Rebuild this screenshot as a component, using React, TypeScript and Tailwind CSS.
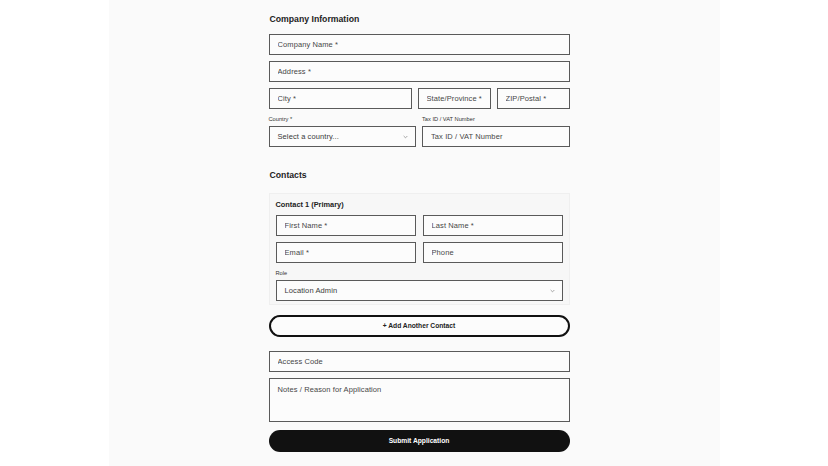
import React from "react";

const font = "font-['Liberation_Sans',Arial,Helvetica,sans-serif]";

const fieldBase =
  "block w-full h-[21px] border border-[#5a5a5a] bg-[#fcfcfc] px-[8px] text-[7.5px] tracking-[0.1px] text-[#333] placeholder:text-[#474747] outline-none";

function Field({ placeholder, className = "" }: { placeholder: string; className?: string }) {
  return <input type="text" placeholder={placeholder} className={`${fieldBase} ${className}`} />;
}

function SelectBox({ value }: { value: string }) {
  return (
    <div className="flex h-[21px] w-full items-center justify-between border border-[#5a5a5a] bg-[#fcfcfc] pl-[8px] pr-[7px] text-[7.5px] tracking-[0.1px] text-[#3a3a3a]">
      <span>{value}</span>
      <svg width="5" height="4" viewBox="0 0 6 4" className="text-[#888]">
        <path d="M0.8 0.8 L3 3 L5.2 0.8" fill="none" stroke="currentColor" strokeWidth="0.9" />
      </svg>
    </div>
  );
}

function Label({ children }: { children: React.ReactNode }) {
  return <div className="h-[8px] text-[5.7px] leading-[8px] text-[#333]">{children}</div>;
}

export default function App() {
  return (
    <div className={`flex h-[466px] w-full justify-center bg-white ${font}`}>
      <div className="h-full w-[611px] bg-[#fafafa] pl-[160px]">
        <form className="w-[301px] pt-[13px]" onSubmit={(e) => e.preventDefault()}>
          <h2 className="h-[12px] pl-[1px] text-[8.7px] font-bold leading-[12px] text-[#222]">Company Information</h2>

          <div className="mt-[9px] flex flex-col gap-[6px]">
            <Field placeholder="Company Name *" />
            <Field placeholder="Address *" />
            <div className="flex gap-[6px]">
              <Field placeholder="City *" className="flex-1" />
              <Field placeholder="State/Province *" className="!w-[73px] shrink-0" />
              <Field placeholder="ZIP/Postal *" className="!w-[73px] shrink-0" />
            </div>
          </div>

          <div className="mt-[6px] grid grid-cols-2 gap-x-[6px]">
            <div>
              <Label>Country *</Label>
              <div className="mt-[3px]">
                <SelectBox value="Select a country..." />
              </div>
            </div>
            <div>
              <Label>Tax ID / VAT Number</Label>
              <div className="mt-[3px]">
                <Field placeholder="Tax ID / VAT Number" />
              </div>
            </div>
          </div>

          <h2 className="mt-[22px] h-[12px] pl-[1px] text-[8.7px] font-bold leading-[12px] text-[#222]">Contacts</h2>

          <section className="mt-[12px] border border-[#efefef] bg-[#f7f7f7] px-[6px] pt-[6px] pb-[3px]">
            <h3 className="h-[10px] text-[7.4px] font-bold leading-[10px] text-[#222]">Contact 1 (Primary)</h3>
            <div className="mt-[5px] grid grid-cols-2 gap-x-[7px] gap-y-[6px]">
              <Field placeholder="First Name *" />
              <Field placeholder="Last Name *" />
              <Field placeholder="Email *" />
              <Field placeholder="Phone" />
            </div>
            <div className="mt-[6px]">
              <Label>Role</Label>
              <div className="mt-[3px]">
                <SelectBox value="Location Admin" />
              </div>
            </div>
          </section>

          <button
            type="button"
            className="mt-[10px] flex h-[22px] w-full items-center justify-center rounded-full border-2 border-[#111] bg-[#fcfcfc] text-[6.7px] font-bold text-[#222]"
          >
            + Add Another Contact
          </button>

          <div className="mt-[14px]">
            <Field placeholder="Access Code" />
          </div>
          <textarea
            placeholder="Notes / Reason for Application"
            className="mt-[6px] block h-[44px] w-full resize-none border border-[#5a5a5a] bg-[#fcfcfc] px-[8px] pt-[5px] text-[7.5px] tracking-[0.1px] text-[#333] placeholder:text-[#474747] outline-none"
          />

          <button
            type="submit"
            className="mt-[8px] flex h-[22px] w-full items-center justify-center rounded-full bg-[#111] text-[6.7px] font-bold text-white"
          >
            Submit Application
          </button>
        </form>
      </div>
    </div>
  );
}
